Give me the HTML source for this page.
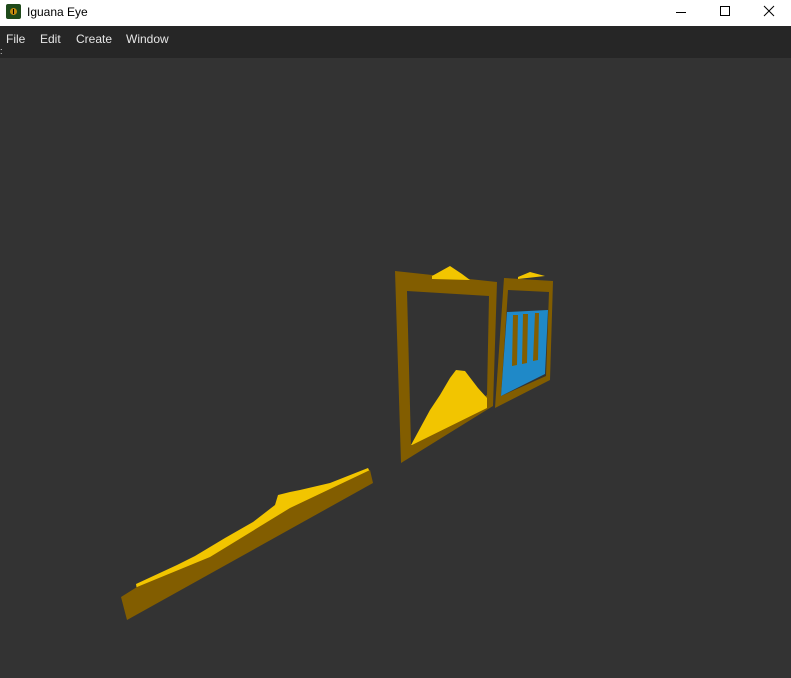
<!DOCTYPE html>
<html><head><style>
html,body{margin:0;padding:0;width:791px;height:678px;overflow:hidden;background:#333333;font-family:"Liberation Sans","DejaVu Sans",sans-serif}
.title{position:absolute;left:0;top:0;width:791px;height:26px;background:#fff}
.title .t{position:absolute;left:27px;top:5px;font-size:12px;color:#000}
.icon{position:absolute;left:6px;top:4px;width:15px;height:15px;background:#1f4a1a;border-radius:2px}
.menu{position:absolute;left:0;top:26px;width:791px;height:32px;background:#262626;color:#e6e6e6;font-size:12px}
.menu span{position:absolute;top:6px}
</style></head><body>
<div class="title"><div class="icon"><div style="position:absolute;left:4px;top:4px;width:7px;height:7px;border-radius:50%;background:#c08a10"></div><div style="position:absolute;left:7px;top:5px;width:1px;height:5px;background:#000"></div></div><span class="t">Iguana Eye</span>
<svg style="position:absolute;left:660px;top:0" width="131" height="26"><line x1="16" y1="12.5" x2="26" y2="12.5" stroke="#000"/><rect x="60.5" y="6.5" width="9" height="9" fill="none" stroke="#000"/><path d="M104 6L114 16M114 6L104 16" stroke="#000"/></svg></div>
<div class="menu"><span style="left:6px">File</span><span style="left:40px">Edit</span><span style="left:76px">Create</span><span style="left:126px">Window</span><span style="left:0;top:20px;font-size:9px">:</span></div>
<svg style="position:absolute;left:0;top:0" width="791" height="678">
<polygon points="136,584 177,565 195,556 225,538 253,522 275,505 278,495 290,492 300,490 330,483 368,468 370,472 290,510 210,559 137,590" fill="#f2c500"/>
<polygon points="121,597 137,587 210,557 290,508 370,470 373,483 127,620" fill="#825d00"/>
<polygon points="395,271 497,282 493,406 401,463" fill="#825d00"/>
<polygon points="407,291 489,296 487,395 411,445" fill="#333333"/>
<polygon points="411,445 430,410 440,395 450,378 456,370 465,371 478,388 487,398 487,408 412,445" fill="#f2c500"/>
<polygon points="432,276 450,266 462,274 470,280 432,279" fill="#f2c500"/>
<polygon points="504,278 553,281 550,380 495,408" fill="#825d00"/>
<polygon points="508,290 549,292 546,376 501,396" fill="#333333"/>
<polygon points="507,312 548,310 545,374 501,396" fill="#1f89c8"/>
<polygon points="513,315 518,315 517,365 512,366" fill="#825d00"/>
<polygon points="523,314 528,314 527,363 522,364" fill="#825d00"/>
<polygon points="535,313 539,313 538,360 533,361" fill="#825d00"/>
<polygon points="518,277 530,272 545,276 518,279" fill="#f2c500"/>
</svg>
</body></html>
